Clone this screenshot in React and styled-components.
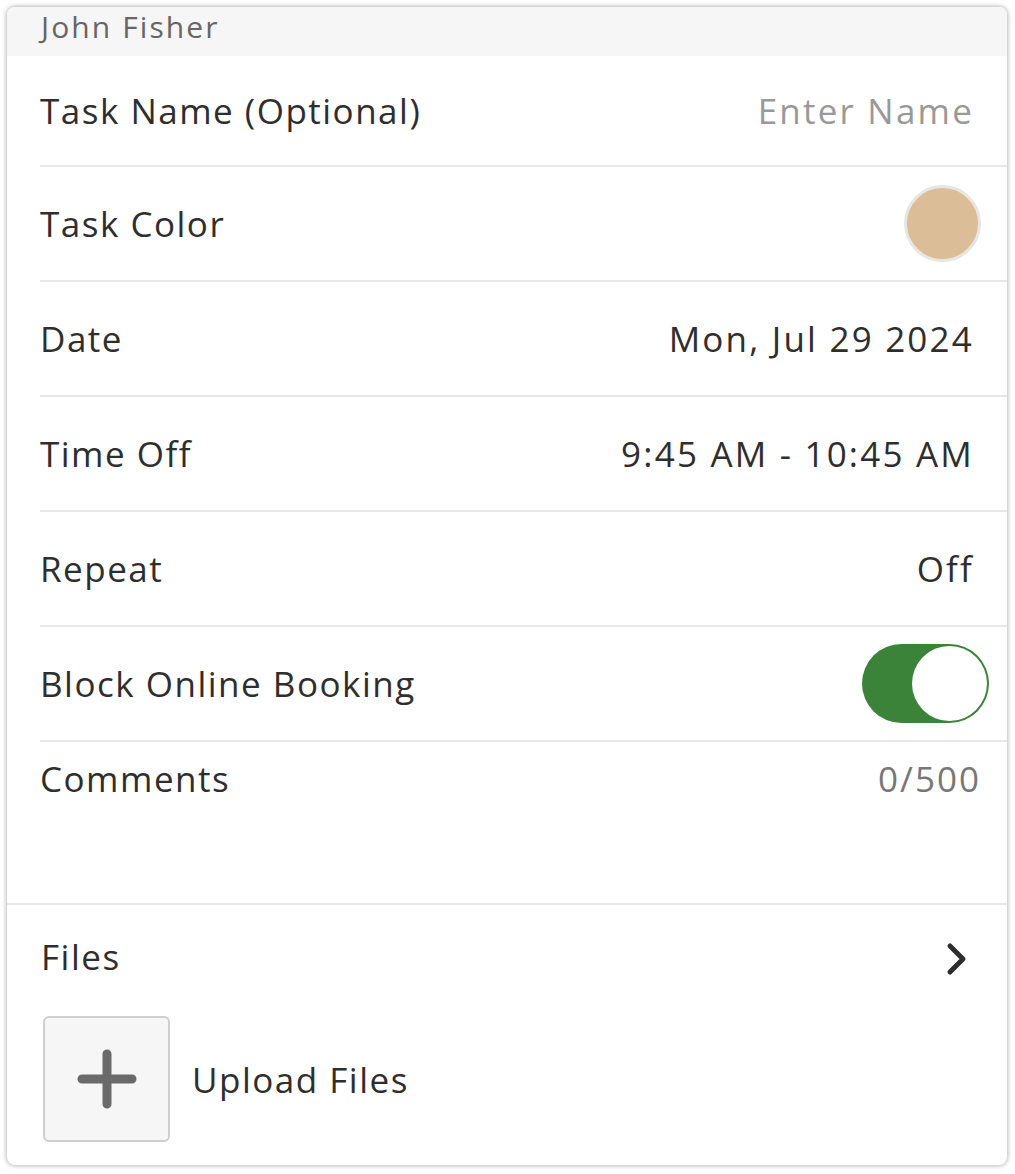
import React from "react";
import styled, { createGlobalStyle } from "styled-components";

const GlobalStyle = createGlobalStyle`
  html, body {
    margin: 0;
    padding: 0;
    background: #ffffff;
  }
  body {
    font-family: "Open Sans", "Lato", "Liberation Sans", sans-serif;
    color: #2e2e2e;
  }
`;

const Page = styled.div`
  padding: 7px 8px 9px 7px;
`;

const Card = styled.div`
  box-sizing: border-box;
  width: 1000px;
  height: 1158px;
  background: #fff;
  border-radius: 8px;
  box-shadow: 0 0 4px 1px rgba(0, 0, 0, 0.28);
  overflow: hidden;
  display: flex;
  flex-direction: column;
`;

const Header = styled.div`
  box-sizing: border-box;
  height: 49px;
  background: #f6f6f6;
  padding: 4px 0 0 34px;
  font-size: 30px;
  line-height: 32px;
  letter-spacing: 2.1px;
  color: #666;
`;

const Fields = styled.div`
  padding-left: 33px;
  border-bottom: 2px solid #e8e8e8;
`;

const Row = styled.div`
  box-sizing: border-box;
  height: ${(p) => (p.$first ? "111px" : "115px")};
  border-bottom: 2px solid #e8e8e8;
  display: flex;
  align-items: center;
  justify-content: space-between;
  padding-right: ${(p) => p.$right || "35px"};
`;

const Label = styled.span`
  font-size: 35px;
  letter-spacing: 1.5px;
  color: #2e2e2e;
`;

const Value = styled.span`
  font-size: 35px;
  letter-spacing: 2.2px;
  margin-right: -2px;
  color: ${(p) => (p.$muted ? "#999" : "#2e2e2e")};
`;

const Swatch = styled.div`
  box-sizing: border-box;
  width: 77px;
  height: 77px;
  border-radius: 50%;
  background: #dbbd98;
  border: 3px solid #e8e6e3;
`;

const Toggle = styled.div`
  box-sizing: border-box;
  width: 127px;
  height: 79px;
  border-radius: 40px;
  background: #3b8339;
  display: flex;
  justify-content: flex-end;
  padding: 2px;
`;

const Knob = styled.div`
  width: 75px;
  height: 75px;
  border-radius: 50%;
  background: #fff;
`;

const Comments = styled.div`
  height: 161px;
  display: flex;
  justify-content: space-between;
  align-items: flex-start;
  padding-top: 13px;
  padding-right: 28px;
  box-sizing: border-box;
`;

const Counter = styled.span`
  font-size: 35px;
  letter-spacing: 2px;
  margin-right: -2px;
  color: #777;
`;

const FilesSection = styled.div`
  padding: 26px 38px 0 34px;
`;

const FilesHead = styled.div`
  display: flex;
  align-items: center;
  justify-content: space-between;
  height: 50px;

  svg {
    margin-top: 5px;
  }
`;

const Upload = styled.div`
  display: flex;
  align-items: center;
  gap: 22px;
  margin-top: 35px;
  margin-left: 2px;
`;

const UploadBox = styled.div`
  box-sizing: border-box;
  width: 127px;
  height: 126px;
  border: 2px solid #cfcfcf;
  border-radius: 6px;
  background: #f6f6f6;
  display: flex;
  align-items: center;
  justify-content: center;
`;

const Chevron = () => (
  <svg width="24" height="34" viewBox="0 0 24 34">
    <path
      d="M5 4 L18 17 L5 30"
      fill="none"
      stroke="#2e2e2e"
      strokeWidth="5"
      strokeLinecap="round"
      strokeLinejoin="round"
    />
  </svg>
);

const Plus = () => (
  <svg width="60" height="60" viewBox="0 0 60 60">
    <path
      d="M30 5 V55 M5 30 H55"
      stroke="#6a6a6a"
      strokeWidth="9"
      strokeLinecap="round"
    />
  </svg>
);

export default function App() {
  return (
    <>
      <GlobalStyle />
      <Page>
        <Card>
          <Header>John Fisher</Header>
          <Fields>
            <Row $first>
              <Label>Task Name (Optional)</Label>
              <Value $muted>Enter Name</Value>
            </Row>
            <Row $right="26px">
              <Label>Task Color</Label>
              <Swatch />
            </Row>
            <Row>
              <Label>Date</Label>
              <Value>Mon, Jul 29 2024</Value>
            </Row>
            <Row>
              <Label>Time Off</Label>
              <Value>9:45 AM - 10:45 AM</Value>
            </Row>
            <Row>
              <Label>Repeat</Label>
              <Value>Off</Value>
            </Row>
            <Row $right="18px">
              <Label>Block Online Booking</Label>
              <Toggle>
                <Knob />
              </Toggle>
            </Row>
            <Comments>
              <Label>Comments</Label>
              <Counter>0/500</Counter>
            </Comments>
          </Fields>
          <FilesSection>
            <FilesHead>
              <Label>Files</Label>
              <Chevron />
            </FilesHead>
            <Upload>
              <UploadBox>
                <Plus />
              </UploadBox>
              <Label>Upload Files</Label>
            </Upload>
          </FilesSection>
        </Card>
      </Page>
    </>
  );
}
